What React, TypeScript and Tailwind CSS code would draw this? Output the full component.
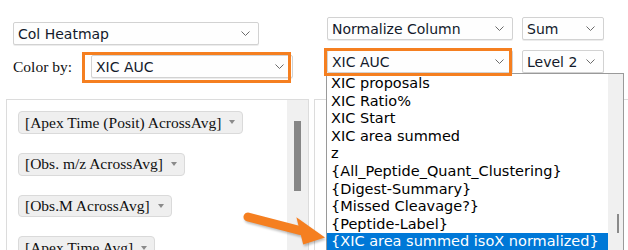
import React from 'react';

const listItems = [
  'XIC proposals',
  'XIC Ratio%',
  'XIC Start',
  'XIC area summed',
  'z',
  '{All_Peptide_Quant_Clustering}',
  '{Digest-Summary}',
  '{Missed Cleavage?}',
  '{Peptide-Label}',
  '{XIC area summed isoX normalized}',
];

const chips = [
  '[Apex Time (Posit) AcrossAvg]',
  '[Obs. m/z AcrossAvg]',
  '[Obs.M AcrossAvg]',
  '[Apex Time Avg]',
];

const Chevron = () => (
  <svg width="9" height="5" viewBox="0 0 9 5" className="shrink-0">
    <path d="M0.5 0.5 L4.5 4.5 L8.5 0.5" fill="none" stroke="#6b6b6b" strokeWidth={1} />
  </svg>
);

const Select = ({ label, className }: { label: string; className: string }) => (
  <div
    className={`flex h-[23px] items-center justify-between rounded-[2px] border border-[#d2d2d2] bg-[#fefefe] pl-[4px] pr-[8px] font-['DejaVu_Sans',sans-serif] text-[14px] text-[#131a2b] shadow-[0_1px_0_#ececec] ${className}`}
  >
    <span className="leading-none">{label}</span>
    <Chevron />
  </div>
);

const Chip = ({ label }: { label: string }) => (
  <div className="flex h-[25px] w-fit items-center gap-[8px] rounded-[4px] border border-[#dadada] bg-[#efefef] pl-[6px] pr-[7px] font-['Liberation_Serif',serif] text-[15.5px] text-[#111]">
    <span className="leading-none">{label}</span>
    <span className="h-0 w-0 border-x-[3.5px] border-t-[4px] border-x-transparent border-t-[#8a8a8a]" />
  </div>
);

export default function App() {
  return (
    <div className="relative h-[250px] w-[628px] overflow-hidden bg-white">
      {/* top controls */}
      <div className="flex h-[99px]">
        <div className="w-[314px] pl-[13px] pt-[22px]">
          <Select label="Col Heatmap" className="w-[246px]" />
          <div className="mt-[10px] flex items-center">
            <span className="w-[78px] font-['Liberation_Serif',serif] text-[15.5px] text-[#111]">Color by:</span>
            <Select label="XIC AUC" className="w-[202px]" />
          </div>
        </div>
        <div className="pl-[13px] pt-[17px]">
          <div className="flex gap-[9px]">
            <Select label="Normalize Column" className="w-[186px]" />
            <Select label="Sum" className="w-[82px]" />
          </div>
          <div className="mt-[10px] flex gap-[9px]">
            <Select label="XIC AUC" className="w-[186px]" />
            <Select label="Level 2" className="w-[82px]" />
          </div>
        </div>
      </div>

      {/* lower panels */}
      <div className="flex gap-[5px] pl-[6px]">
        <div className="flex h-[160px] w-[303px] border-x border-t border-[#dcdcdc]">
          <div className="flex flex-1 flex-col gap-[19px] pl-[11px] pt-[11px]">
            {chips.map((c) => (
              <Chip key={c} label={c} />
            ))}
          </div>
          <div className="relative w-[21px] bg-[#f0f0f0]">
            <div className="absolute left-[7px] top-[21px] h-[70px] w-[7px] bg-[#868686]" />
          </div>
        </div>
        <div className="h-[160px] flex-1 border-l border-t border-[#dcdcdc]" />
      </div>

      {/* open dropdown list */}
      <div className="absolute left-[326px] top-[73px] flex h-[190px] w-[298px] border-x border-t border-[#9a9a9a] bg-white">
        <div className="flex-1 pt-[1px] font-['DejaVu_Sans',sans-serif] text-[14.5px] text-black">
          {listItems.map((item, i) => (
            <div
              key={item}
              className={`h-[17.6px] whitespace-nowrap pl-[4px] leading-[17.6px] ${
                i === listItems.length - 1 ? 'bg-[#0078d7] text-white' : ''
              }`}
            >
              {item}
            </div>
          ))}
        </div>
        <div className="relative w-[15px] bg-[#f0f0f0]">
          <div className="absolute left-[9px] top-[140px] h-[19px] w-[2px] bg-[#8a8a8a]" />
        </div>
      </div>

      {/* orange highlight boxes */}
      <div className="absolute left-[82px] top-[52px] h-[31px] w-[209px] border-[3px] border-[#f57f20]" />
      <div className="absolute left-[324px] top-[48px] h-[28px] w-[188px] border-[3px] border-[#f57f20]" />

      {/* arrow */}
      <svg
        className="absolute left-[240px] top-[205px] drop-shadow-[1px_2px_1px_rgba(0,0,0,0.25)]"
        width="90"
        height="45"
        viewBox="0 0 90 45"
      >
        <line x1="8" y1="12" x2="60" y2="25.5" stroke="#f57f20" strokeWidth={9} strokeLinecap="round" />
        <polygon points="56.4,12.3 85,32.5 63.2,39.5" fill="#f57f20" />
      </svg>
    </div>
  );
}
